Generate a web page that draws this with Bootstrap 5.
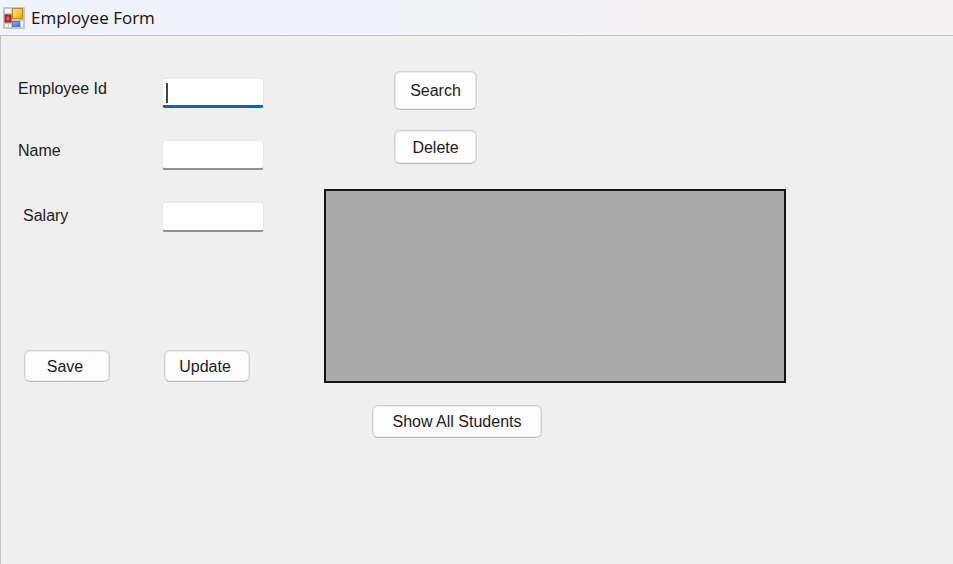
<!DOCTYPE html>
<html lang="en">
<head>
<meta charset="utf-8">
<meta name="viewport" content="width=device-width, initial-scale=1">
<title>Employee Form</title>
<link href="https://cdn.jsdelivr.net/npm/bootstrap@5.3.0/dist/css/bootstrap.min.css" rel="stylesheet">
<style>
  body { background: #efefef; color: #1c1c1c; font-family: "Liberation Sans", Arial, sans-serif; font-size: 16px; line-height: 24px; }
  .title-bar { height: 36px; padding-left: 3px; gap: 6px; border-bottom: 1px solid #c2c2c2; background: linear-gradient(90deg, #eff4f9 0%, #f0f3f7 40%, #f5f1f3 75%, #f5f1f3 100%); }
  .title-bar h1 { font: 400 17px/24px "Open Sans", "Noto Sans", sans-serif; color: #111; }
  .client { border-left: 1px solid #c2c2c2; }
  .entry { width: 323px; padding: 42px 0 24px 17px; }
  .fields { display: grid; grid-template-columns: 144px 102px; row-gap: 32px; }
  .fields label { padding-top: 1px; line-height: 20px; }
  .fields .indent { padding-left: 5px; padding-top: 4px; }
  .entry-box { height: 30px; padding: 2px 4px; border: 1px solid #e8e8e8; border-bottom: 2px solid #8f8f8f; border-radius: 3px; font-size: 16px; }
  .active-box .entry-box { border-bottom: 3px solid #0067c0; }
  .active-box::before { content: ""; position: absolute; left: 4px; top: 5px; width: 2px; height: 20px; background: #444; }
  .push { padding: 1px 0 0; background: #fdfdfd; border: 1px solid #cfcfcf; border-bottom-color: #bcbcbc; box-shadow: inset 0 0 0 1px #ececec; border-radius: 6px; color: #1c1c1c; font-size: 16px; line-height: 24px; height: 32px; width: 86px; }
  .push:hover { background: #e5f1fb; color: #1c1c1c; }
  .commands { margin-top: 118px; padding-left: 6px; gap: 54px; }
  .commands .push { padding-right: 4px; }
  .records { flex: 0 1 462px; padding: 35px 0 24px; }
  .lookups { padding-left: 70px; gap: 20px; }
  .lookups .push { width: 83px; height: 34px; }
  .lookups .tall { height: 39px; }
  .data-area { height: 194px; margin-top: 25px; background: #ababab; border: 2px solid #151515; }
  .show-row { padding: 22px 0 0 48px; }
  .show-row .push { width: 170px; height: 33px; }
</style>
<script src="https://cdn.jsdelivr.net/npm/bootstrap@5.3.0/dist/js/bootstrap.bundle.min.js" defer></script>
</head>
<body class="d-flex flex-column min-vh-100">
<header class="title-bar d-flex align-items-center">
  <svg width="22" height="22" viewBox="0 0 22 22" aria-hidden="true">
    <defs>
      <linearGradient id="gold" x2="1" y2="1"><stop offset="0" stop-color="#ffe88a"/><stop offset="1" stop-color="#f2a800"/></linearGradient>
      <radialGradient id="red"><stop offset="0" stop-color="#ef7a60"/><stop offset="1" stop-color="#b51a16"/></radialGradient>
      <linearGradient id="blue" x2="1" y2="1"><stop offset="0" stop-color="#8ebcff"/><stop offset="1" stop-color="#2f66d6"/></linearGradient>
    </defs>
    <rect width="22" height="22" rx="1" fill="#c3c5c8"/>
    <rect x="2" y="2" width="6" height="4" fill="#f5f6f7"/>
    <rect x="2" y="8" width="6" height="7" fill="url(#red)" stroke="#a3201b"/>
    <rect x="2" y="17" width="3" height="3" fill="#f5f6f7"/>
    <rect x="6" y="17" width="2" height="3" fill="#f5f6f7"/>
    <rect x="9.500" y="1.500" width="10" height="10" fill="url(#gold)" stroke="#c08a10"/>
    <rect x="9.500" y="14.500" width="7" height="5" fill="url(#blue)" stroke="#4a79cf"/>
    <rect x="18" y="14" width="2" height="6" fill="#f5f6f7"/>
  </svg>
  <h1 class="m-0">Employee Form</h1>
</header>
<main class="client d-flex flex-grow-1">
  <form class="entry flex-shrink-0">
    <div class="fields">
      <label for="empId">Employee Id</label>
      <div class="active-box position-relative"><input id="empId" type="text" class="entry-box form-control"></div>
      <label for="empName">Name</label>
      <input id="empName" type="text" class="entry-box form-control">
      <label for="salary" class="indent">Salary</label>
      <input id="salary" type="text" class="entry-box form-control">
    </div>
    <div class="commands d-flex">
      <button type="button" class="btn push">Save</button>
      <button type="button" class="btn push">Update</button>
    </div>
  </form>
  <section class="records" aria-label="Student records">
    <div class="lookups d-flex flex-column">
      <button type="button" class="btn push tall">Search</button>
      <button type="button" class="btn push">Delete</button>
    </div>
    <div class="data-area"></div>
    <div class="show-row">
      <button type="button" class="btn push">Show All Students</button>
    </div>
  </section>
</main>
</body>
</html>
